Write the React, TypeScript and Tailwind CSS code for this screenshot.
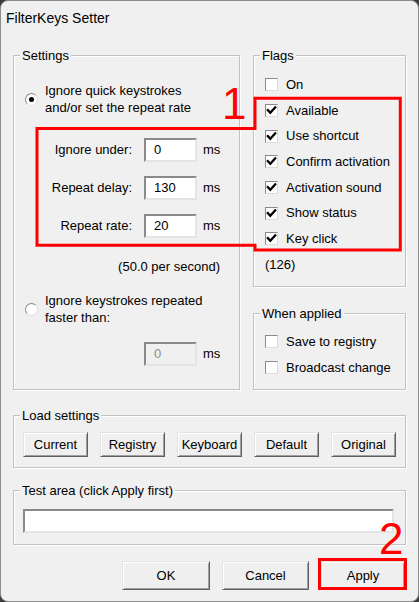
import React from "react";

const FONT = { fontFamily: '"Liberation Sans", Arial, sans-serif' };

function Check({ checked }: { checked?: boolean }) {
  return (
    <div className="w-[13px] h-[13px] shrink-0 bg-white border border-t-[#8a8a8a] border-l-[#8a8a8a] border-r-[#dcdcdc] border-b-[#dcdcdc] flex items-center justify-center">
      {checked && (
        <svg width="11" height="11" viewBox="0 0 11 11">
          <path d="M1.8 5 L4.3 7.8 L9.2 2.4" fill="none" stroke="#000" strokeWidth="2.3" strokeLinecap="square" />
        </svg>
      )}
    </div>
  );
}

function Radio({ checked }: { checked?: boolean }) {
  return (
    <div className="w-[13px] h-[13px] shrink-0 rounded-full bg-white border border-t-[#8a8a8a] border-l-[#8a8a8a] border-r-[#e0e0e0] border-b-[#e0e0e0] flex items-center justify-center">
      {checked && <div className="w-[5px] h-[5px] rounded-full bg-black" />}
    </div>
  );
}

function Group({
  label,
  className,
  children,
}: {
  label: string;
  className?: string;
  children?: React.ReactNode;
}) {
  return (
    <div className={"relative border border-[#c2c2c2] shadow-[inset_1px_1px_0_#ffffff,1px_1px_0_#ffffff] " + (className ?? "")}>
      <span className="absolute left-[6px] top-[-9px] bg-[#f0f0f0] px-[2px] leading-[17px] text-[13px] text-black">
        {label}
      </span>
      {children}
    </div>
  );
}

function Field({ value, disabled }: { value: string; disabled?: boolean }) {
  return (
    <div
      className={
        "w-[53px] h-[24px] border-[2px] border-t-[#8a8a8a] border-l-[#8a8a8a] border-r-[#e4e4e4] border-b-[#e4e4e4] flex items-center pl-[8px] text-[13px] " +
        (disabled ? "bg-[#f0f0f0] text-[#8d8d8d]" : "bg-white text-black")
      }
    >
      {value}
    </div>
  );
}

function Btn({ label, className }: { label: string; className?: string }) {
  return (
    <div
      className={
        "flex items-center justify-center bg-[#efefef] border border-t-[#e3e3e3] border-l-[#e3e3e3] border-r-[#5f5f5f] border-b-[#5f5f5f] shadow-[inset_1px_1px_0_#ffffff,inset_-1px_-1px_0_#a0a0a0] text-[13px] text-black " +
        (className ?? "")
      }
    >
      {label}
    </div>
  );
}

function Row({ label, value }: { label: string; value: string }) {
  return (
    <div className="h-[24px] flex items-center">
      <div className="w-[118px] text-right">{label}</div>
      <div className="ml-[12px]">
        <Field value={value} />
      </div>
      <div className="ml-[6px]">ms</div>
    </div>
  );
}

function FlagRow({ label, checked }: { label: string; checked?: boolean }) {
  return (
    <div className="h-[25.67px] flex items-center">
      <Check checked={checked} />
      <span className="ml-[8px]">{label}</span>
    </div>
  );
}

export default function App() {
  return (
    <div className="w-[419px] h-[602px] bg-[#3c3c3c] text-[13px] text-black" style={FONT}>
      <div className="relative w-full h-full rounded-[8px] bg-[#f0f0f0] border border-[#8c8c8c] overflow-hidden">
        {/* Title */}
        <div className="h-[54px] pl-[5px] pt-[8px] text-[14px] leading-[18px]">FilterKeys Setter</div>

        <div className="px-[12px]">
          {/* top row */}
          <div className="flex gap-[13px]">
            <Group label="Settings" className="w-[228px] h-[335px]">
              <div className="pt-[26px] pl-[11px]">
                <div className="flex items-center">
                  <Radio checked />
                  <div className="ml-[7px] leading-[17px]">
                    <div>Ignore quick keystrokes</div>
                    <div>and/or set the repeat rate</div>
                  </div>
                </div>
              </div>
              <div className="mt-[22px] flex flex-col gap-[14px]">
                <Row label="Ignore under:" value="0" />
                <Row label="Repeat delay:" value="130" />
                <Row label="Repeat rate:" value="20" />
              </div>
              <div className="mt-[20px] w-[206px] text-right leading-[17px]">(50.0 per second)</div>
              <div className="mt-[17px] pl-[11px] flex items-center">
                <Radio />
                <div className="ml-[7px] leading-[17px]">
                  <div>Ignore keystrokes repeated</div>
                  <div>faster than:</div>
                </div>
              </div>
              <div className="mt-[16px] flex items-center">
                <div className="w-[118px]" />
                <div className="ml-[12px]">
                  <Field value="0" disabled />
                </div>
                <div className="ml-[6px]">ms</div>
              </div>
            </Group>

            <div className="flex flex-col">
              <Group label="Flags" className="w-[153px] h-[232px]">
                <div className="pt-[16px] pl-[11px]">
                  <FlagRow label="On" />
                  <FlagRow label="Available" checked />
                  <FlagRow label="Use shortcut" checked />
                  <FlagRow label="Confirm activation" checked />
                  <FlagRow label="Activation sound" checked />
                  <FlagRow label="Show status" checked />
                  <FlagRow label="Key click" checked />
                  <div className="h-[25.67px] flex items-center">(126)</div>
                </div>
              </Group>
              <Group label="When applied" className="mt-[26px] w-[153px] h-[77px]">
                <div className="pt-[15px] pl-[11px]">
                  <FlagRow label="Save to registry" />
                  <FlagRow label="Broadcast change" />
                </div>
              </Group>
            </div>
          </div>

          {/* Load settings */}
          <Group label="Load settings" className="mt-[25px] w-[393px] h-[53px]">
            <div className="pt-[16px] pl-[9px] flex gap-[12px]">
              <Btn label="Current" className="w-[65px] h-[25px]" />
              <Btn label="Registry" className="w-[65px] h-[25px]" />
              <Btn label="Keyboard" className="w-[65px] h-[25px]" />
              <Btn label="Default" className="w-[65px] h-[25px]" />
              <Btn label="Original" className="w-[65px] h-[25px]" />
            </div>
          </Group>

          {/* Test area */}
          <Group label="Test area (click Apply first)" className="mt-[22px] w-[393px] h-[55px]">
            <div className="pt-[18px] pl-[9px]">
              <div className="w-[371px] h-[24px] bg-white border-[2px] border-t-[#8a8a8a] border-l-[#8a8a8a] border-r-[#e4e4e4] border-b-[#e4e4e4]" />
            </div>
          </Group>

          {/* Dialog buttons */}
          <div className="mt-[16px] flex justify-end gap-[12px] pr-[1px]">
            <Btn label="OK" className="w-[88px] h-[29px]" />
            <Btn label="Cancel" className="w-[87px] h-[29px]" />
            <Btn label="Apply" className="w-[84px] h-[29px]" />
          </div>
        </div>

        {/* Red annotations */}
        <svg className="absolute left-[-1px] top-[-1px] pointer-events-none" width="419" height="602" viewBox="0 0 419 602">
          <polygon
            points="37,128.5 255,128.5 255,98.3 400.3,98.3 400.3,250 255,250 255,245.3 37,245.3"
            fill="none"
            stroke="#ff0000"
            strokeWidth="3"
          />
          <rect x="319.5" y="559.5" width="86" height="29" fill="none" stroke="#ff0000" strokeWidth="3" />
        </svg>
        <span className="absolute left-[221px] top-[81px] text-[44px] leading-[44px] text-[#ff0000]">1</span>
        <span className="absolute left-[378px] top-[516px] text-[44px] leading-[44px] text-[#ff0000]">2</span>
      </div>
    </div>
  );
}
